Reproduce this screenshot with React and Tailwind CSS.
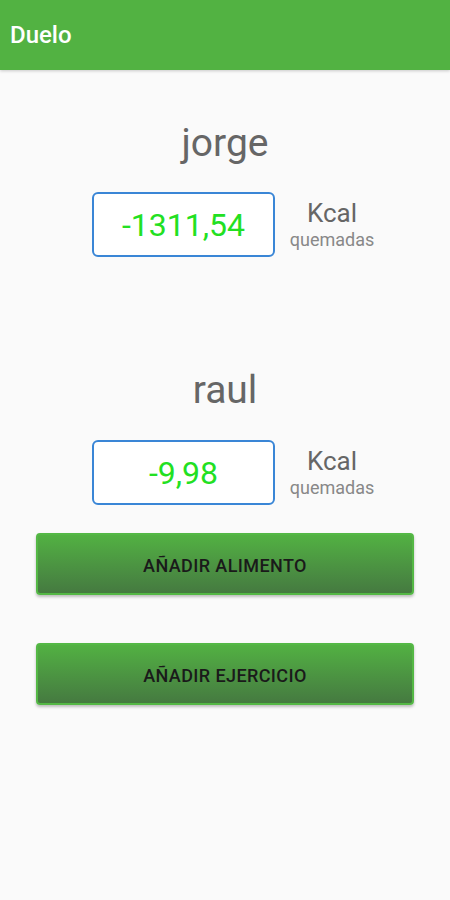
import React from 'react';

const players = [
  { name: 'jorge', kcal: '-1311,54' },
  { name: 'raul', kcal: '-9,98' },
];

const KcalRow = ({ value }) => (
  <div className="flex items-center">
    <div className="ml-[92px] flex h-[65px] w-[183px] items-center justify-center rounded-[6px] border-2 border-[#3a86d6] bg-white">
      <span className="text-[32px] leading-none text-[#22e022]">{value}</span>
    </div>
    <div className="ml-[12px] flex w-[90px] flex-col items-center">
      <span className="text-[26px] leading-[28px] text-[#666666]">Kcal</span>
      <span className="mt-[3px] text-[18px] leading-[20px] text-[#888888]">quemadas</span>
    </div>
  </div>
);

const ActionButton = ({ label }) => (
  <button className="mx-[36px] flex h-[62px] w-[378px] items-center justify-center rounded-[4px] border-2 border-[#54b845] bg-gradient-to-b from-[#52b142] to-[#457a40] shadow-[0_2px_3px_rgba(0,0,0,0.25)]">
    <span className="mt-[2px] text-[18px] font-medium tracking-[0.4px] text-[#1a1a1a]">{label}</span>
  </button>
);

export default function App() {
  return (
    <div
      className="flex h-[900px] w-[450px] flex-col bg-[#fafafa]"
      style={{ fontFamily: 'Roboto, "Liberation Sans", sans-serif' }}
    >
      <header className="flex h-[70px] items-center bg-[#52b242] px-[10px] shadow-[0_1px_3px_rgba(0,0,0,0.2)]">
        <h1 className="text-[24px] font-medium text-white">Duelo</h1>
      </header>

      <div className="flex flex-col pt-[45px]">
        <div className="flex justify-center">
          <span className="text-[39px] leading-[56px] text-[#666666]">{players[0].name}</span>
        </div>
        <div className="mt-[21px]">
          <KcalRow value={players[0].kcal} />
        </div>

        <div className="mt-[105px] flex justify-center">
          <span className="text-[39px] leading-[56px] text-[#666666]">{players[1].name}</span>
        </div>
        <div className="mt-[22px]">
          <KcalRow value={players[1].kcal} />
        </div>

        <div className="mt-[28px]">
          <ActionButton label="AÑADIR ALIMENTO" />
        </div>
        <div className="mt-[48px]">
          <ActionButton label="AÑADIR EJERCICIO" />
        </div>
      </div>
    </div>
  );
}
